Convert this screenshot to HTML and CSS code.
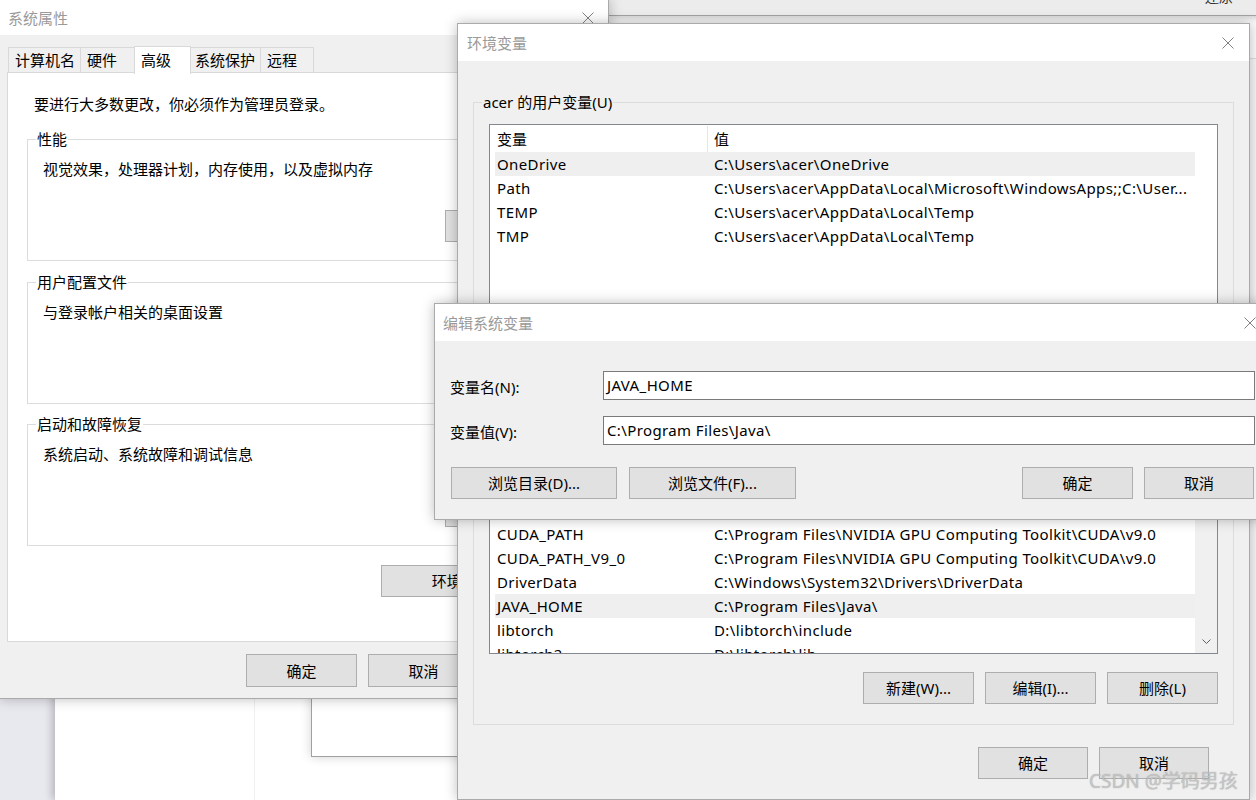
FILE: index.html
```html
<!DOCTYPE html>
<html lang="zh-CN">
<head>
<meta charset="utf-8">
<title>环境变量</title>
<link rel="stylesheet" href="styles.css">
</head>
<body>
<div class="desktop">
  <div class="bgwin bg-left"><div class="bg-divider"></div></div>
  <div class="bgwin bg-mid"></div>
  <div class="bgwin bg-right"><div class="bg-right-head"></div></div>
  <div class="bgwin bg-top"><span class="bg-top-text">还原</span></div>

  <section class="win sysprops">
    <header class="titlebar sp-title">
      <span class="title">系统属性</span>
      <svg class="close" width="12" height="12" viewBox="0 0 12 12"><path d="M0.5 0.5L11.5 11.5M11.5 0.5L0.5 11.5" stroke="#808080" stroke-width="1" fill="none"/></svg>
    </header>
    <div class="sp-body">
      <div class="tabs">
        <div class="tab t1">计算机名</div>
        <div class="tab t2">硬件</div>
        <div class="tab t3 active">高级</div>
        <div class="tab t4">系统保护</div>
        <div class="tab t5">远程</div>
      </div>
      <div class="tabpanel">
        <p class="note">要进行大多数更改，你必须作为管理员登录。</p>
        <div class="group sp-group g-first">
          <div class="legend">性能</div>
          <p class="gtext">视觉效果，处理器计划，内存使用，以及虚拟内存</p>
          <div class="grow-btn"><button class="btn set-btn">设置(S)...</button></div>
        </div>
        <div class="group sp-group g-second">
          <div class="legend">用户配置文件</div>
          <p class="gtext">与登录帐户相关的桌面设置</p>
          <div class="grow-btn"><button class="btn set-btn">设置(E)...</button></div>
        </div>
        <div class="group sp-group g-third">
          <div class="legend">启动和故障恢复</div>
          <p class="gtext">系统启动、系统故障和调试信息</p>
          <div class="grow-btn"><button class="btn set-btn">设置(T)...</button></div>
        </div>
        <div class="env-row"><button class="btn env-btn">环境变量(N)...</button></div>
      </div>
      <div class="sp-footer">
        <button class="btn fbtn">确定</button>
        <button class="btn fbtn">取消</button>
        <button class="btn fbtn">应用(A)</button>
      </div>
    </div>
  </section>

  <section class="win envvars">
    <header class="titlebar ev-title">
      <span class="title">环境变量</span>
      <svg class="close" width="12" height="12" viewBox="0 0 12 12"><path d="M0.5 0.5L11.5 11.5M11.5 0.5L0.5 11.5" stroke="#808080" stroke-width="1" fill="none"/></svg>
    </header>
    <div class="ev-body">
      <div class="group ev-group ev-user">
        <div class="legend">acer 的用户变量(U)</div>
        <div class="listview lv-user">
          <div class="lv-main">
            <div class="lv-head"><span class="c1">变量</span><span class="c2">值</span></div>
            <div class="lv-row sel"><span class="c1">OneDrive</span><span class="c2">C:\Users\acer\OneDrive</span></div>
            <div class="lv-row"><span class="c1">Path</span><span class="c2">C:\Users\acer\AppData\Local\Microsoft\WindowsApps;;C:\User...</span></div>
            <div class="lv-row"><span class="c1">TEMP</span><span class="c2">C:\Users\acer\AppData\Local\Temp</span></div>
            <div class="lv-row"><span class="c1">TMP</span><span class="c2">C:\Users\acer\AppData\Local\Temp</span></div>
          </div>
          <div class="lv-side"></div>
        </div>
        <div class="btn-row">
          <button class="btn gbtn">新建(N)...</button>
          <button class="btn gbtn">编辑(E)...</button>
          <button class="btn gbtn">删除(D)</button>
        </div>
      </div>
      <div class="group ev-group ev-sys">
        <div class="legend">系统变量(S)</div>
        <div class="listview lv-sys">
          <div class="lv-main">
            <div class="lv-head"><span class="c1">变量</span><span class="c2">值</span></div>
            <div class="lv-row"><span class="c1">ACSetupSvcPort</span><span class="c2">23210</span></div>
            <div class="lv-row"><span class="c1">ACSvcPort</span><span class="c2">17532</span></div>
            <div class="lv-row"><span class="c1">ComSpec</span><span class="c2">C:\WINDOWS\system32\cmd.exe</span></div>
            <div class="lv-row"><span class="c1">CUDA_PATH</span><span class="c2">C:\Program Files\NVIDIA GPU Computing Toolkit\CUDA\v9.0</span></div>
            <div class="lv-row"><span class="c1">CUDA_PATH_V9_0</span><span class="c2">C:\Program Files\NVIDIA GPU Computing Toolkit\CUDA\v9.0</span></div>
            <div class="lv-row"><span class="c1">DriverData</span><span class="c2">C:\Windows\System32\Drivers\DriverData</span></div>
            <div class="lv-row sel"><span class="c1">JAVA_HOME</span><span class="c2">C:\Program Files\Java\</span></div>
            <div class="lv-row"><span class="c1">libtorch</span><span class="c2">D:\libtorch\include</span></div>
            <div class="lv-row"><span class="c1">libtorch2</span><span class="c2">D:\libtorch\lib</span></div>
          </div>
          <div class="lv-side scroll">
            <svg class="arrow" width="9" height="6" viewBox="0 0 9 6"><path d="M0.5 0.5L4.5 4.5L8.5 0.5" stroke="#606060" stroke-width="1" fill="none"/></svg>
          </div>
        </div>
        <div class="btn-row">
          <button class="btn gbtn">新建(W)...</button>
          <button class="btn gbtn">编辑(I)...</button>
          <button class="btn gbtn">删除(L)</button>
        </div>
      </div>
      <div class="ev-footer">
        <button class="btn ebtn">确定</button>
        <button class="btn ebtn">取消</button>
      </div>
    </div>
  </section>

  <section class="win editvar">
    <header class="titlebar ed-title">
      <span class="title">编辑系统变量</span>
      <svg class="close" width="12" height="12" viewBox="0 0 12 12"><path d="M0.5 0.5L11.5 11.5M11.5 0.5L0.5 11.5" stroke="#808080" stroke-width="1" fill="none"/></svg>
    </header>
    <div class="ed-body">
      <div class="field">
        <label class="flabel">变量名(N):</label>
        <div class="finput">JAVA_HOME</div>
      </div>
      <div class="field f2">
        <label class="flabel">变量值(V):</label>
        <div class="finput">C:\Program Files\Java\</div>
      </div>
      <div class="ed-buttons">
        <div class="ed-left">
          <button class="btn browse b1">浏览目录(D)...</button>
          <button class="btn browse b2">浏览文件(F)...</button>
        </div>
        <div class="ed-right">
          <button class="btn okc ok">确定</button>
          <button class="btn okc">取消</button>
        </div>
      </div>
    </div>
  </section>

  <div class="watermark">CSDN @学码男孩</div>
</div>
</body>
</html>
```

FILE: styles.css
```css
html, body {
  margin: 0;
  padding: 0;
}
body {
  width: 1256px;
  height: 800px;
  overflow: hidden;
  background: #e8e8ef;
  font-family: "Noto Sans", "Noto Sans CJK SC", sans-serif;
  font-size: 15px;
  line-height: 18px;
  color: #000;
}
p { margin: 0; }

.desktop {
  position: relative;
  width: 1256px;
  height: 800px;
  overflow: hidden;
}

/* ---------- background windows ---------- */
.bgwin { position: absolute; box-sizing: border-box; }
.bg-left {
  left: 55px; top: 0; width: 1300px; height: 800px;
  background: #fff;
  box-shadow: -3px 0 8px rgba(0,0,0,0.22);
}
.bg-divider {
  margin-left: 199px;
  width: 1px;
  height: 100%;
  background: #f0f0f0;
}
.bg-mid {
  left: 311px; top: 300px; width: 500px; height: 457px;
  background: #fff;
  border: 1px solid #a0a0a0;
  box-shadow: 0 0 10px rgba(0,0,0,0.18);
}
.bg-right {
  left: 609px; top: 15px; width: 700px; height: 800px;
  background: #f6f6f6;
}
.bg-right-head {
  height: 43px;
  background: #fbfbfb;
  border-bottom: 1px solid #dcdcdc;
}
.bg-top {
  left: 609px; top: -40px; width: 700px; height: 56px;
  background: #ececec;
  border-bottom: 1px solid #a3a3a3;
  box-shadow: 0 2px 6px rgba(0,0,0,0.18);
  padding: 27px 0 0 596px;
}
.bg-top-text { font-size: 14px; color: #333; }

/* ---------- windows ---------- */
.win {
  position: absolute;
  box-sizing: border-box;
  display: flex;
  flex-direction: column;
  background: #f0f0f0;
  border: 1px solid #aaaaaa;
  box-shadow: 0 0 12px rgba(0,0,0,0.26);
}
.titlebar {
  flex: none;
  background: #fff;
  display: flex;
  align-items: center;
  justify-content: space-between;
}
.title { color: #9a9a9a; }
.close { display: block; }

.btn {
  box-sizing: border-box;
  font: inherit;
  color: #000;
  padding: 0;
  margin: 0;
  height: 32px;
  border: 1px solid #adadad;
  background: #e1e1e1;
  display: flex;
  align-items: center;
  justify-content: center;
  white-space: nowrap;
}

/* group box */
.group {
  box-sizing: border-box;
  border: 1px solid #dcdcdc;
  padding: 0 15px;
}
.legend {
  display: table;
  margin: -10px 0 0 -7px;
  padding: 0 1px;
  line-height: 18px;
  background: inherit;
}

/* ---------- system properties ---------- */
.sysprops {
  left: -1px; top: -1px; width: 610px; height: 700px;
}
.sp-title {
  height: 35px;
  padding: 0 14px 0 8px;
}
.sp-body {
  flex: 1;
  padding: 10px 7px 0 7px;
  display: flex;
  flex-direction: column;
}
.tabs {
  display: flex;
  align-items: flex-end;
  height: 27px;
  padding-left: 1px;
  position: relative;
  z-index: 1;
}
.tab {
  box-sizing: border-box;
  height: 25px;
  border: 1px solid #d9d9d9;
  border-bottom: none;
  margin-left: -1px;
  padding: 0 0 0 6px;
  line-height: 24px;
  background: #f0f0f0;
  white-space: nowrap;
}
.tab:first-child { margin-left: 0; }
.t1 { width: 73px; }
.t2 { width: 55px; }
.t3 { width: 57px; }
.t4 { width: 71px; padding-left: 4px; }
.t5 { width: 54px; }
.tab.active {
  height: 28px;
  margin-bottom: -1px;
  padding-top: 1px;
  line-height: 24px;
  background: #fff;
  align-self: flex-end;
  position: relative;
  top: 1px;
  margin-top: -1px;
}
.tabpanel {
  box-sizing: border-box;
  height: 570px;
  background: #fff;
  border: 1px solid #d9d9d9;
  padding: 22px 19px 0 19px;
}
.note { margin-left: 7px; }
.sp-group { height: 122px; background: #fff; }
.g-first { margin-top: 26px; }
.g-second { margin-top: 21px; }
.g-third { margin-top: 20px; }
.gtext { margin-top: 12px; }
.grow-btn {
  display: flex;
  justify-content: flex-end;
  margin-top: 32px;
}
.set-btn { width: 120px; }
.env-row {
  display: flex;
  justify-content: flex-end;
  margin-top: 19px;
}
.env-btn { width: 200px; padding-right: 6px; }
.sp-footer {
  display: flex;
  justify-content: flex-end;
  gap: 11px;
  margin-top: 12px;
}
.fbtn { width: 111px; height: 33px; }

/* ---------- environment variables ---------- */
.envvars {
  left: 457px; top: 23px; width: 793px; height: 777px;
}
.ev-title {
  height: 37px;
  padding: 0 15px 0 9px;
}
.ev-body {
  flex: 1;
  padding: 0 15px;
  display: flex;
  flex-direction: column;
}
.ev-group { background: #f0f0f0; }
.ev-user { margin-top: 41px; padding-bottom: 14px; }
.ev-sys { margin-top: 15px; padding-bottom: 20px; }

.listview {
  box-sizing: border-box;
  margin-top: 13px;
  border: 1px solid #828790;
  background: #fff;
  display: flex;
  overflow: hidden;
}
.lv-user { height: 202px; }
.lv-sys { height: 232px; }
.lv-main {
  flex: 1;
  padding: 1px 0 0 5px;
  overflow: hidden;
  white-space: nowrap;
}
.lv-side {
  width: 22px;
  flex: none;
  display: flex;
  flex-direction: column;
  justify-content: flex-end;
  align-items: center;
}
.lv-side.scroll { background: #f0f0f0; }
.arrow { display: block; margin-bottom: 8px; }
.lv-head {
  display: flex;
  height: 26px;
  line-height: 26px;
}
.lv-row {
  display: flex;
  height: 24px;
  line-height: 24px;
  letter-spacing: 0.38px;
}
.lv-row.sel { background: #efefef; }
.c1 {
  box-sizing: border-box;
  width: 212px;
  flex: none;
  padding-left: 2px;
}
.c2 { padding-left: 7px; }
.lv-head .c2 {
  border-left: 1px solid #e5e5e5;
  padding-left: 6px;
}
.btn-row {
  display: flex;
  justify-content: flex-end;
  gap: 11px;
  margin-top: 12px;
}
.ev-sys .btn-row { margin-top: 18px; }
.gbtn { width: 111px; }
.ev-footer {
  display: flex;
  justify-content: flex-end;
  gap: 11px;
  margin-top: 22px;
  padding-right: 25px;
}
.ebtn { width: 110px; }

/* ---------- edit dialog ---------- */
.editvar {
  left: 434px; top: 303px; width: 838px; height: 217px;
}
.ed-title {
  height: 37px;
  padding: 0 15px 0 8px;
}
.ed-body {
  flex: 1;
  padding: 30px 16px 0 15px;
  display: flex;
  flex-direction: column;
}
.field {
  display: flex;
  align-items: center;
}
.f2 { margin-top: 16px; }
.flabel {
  width: 153px;
  flex: none;
  padding-top: 3px;
}
.finput {
  flex: 1;
  box-sizing: border-box;
  height: 29px;
  border: 1px solid #7a7a7a;
  background: #fff;
  padding: 0 0 0 3px;
  line-height: 26px;
  white-space: nowrap;
  letter-spacing: 0.38px;
}
.ed-buttons {
  display: flex;
  justify-content: space-between;
  margin-top: 22px;
}
.ed-left, .ed-right { display: flex; }
.ed-left { padding-left: 1px; gap: 12px; }
.ed-right { gap: 11px; padding-right: 1px; }
.b1 { width: 166px; }
.b2 { width: 167px; }
.okc { width: 110px; }
.okc.ok { width: 111px; }

/* ---------- watermark ---------- */
.watermark {
  position: absolute;
  left: 1089px;
  top: 769px;
  font-size: 19px;
  line-height: 24px;
  color: rgba(205,205,205,0.8);
  text-shadow: 0 0 1px rgba(90,90,90,0.55);
  white-space: nowrap;
}
```
